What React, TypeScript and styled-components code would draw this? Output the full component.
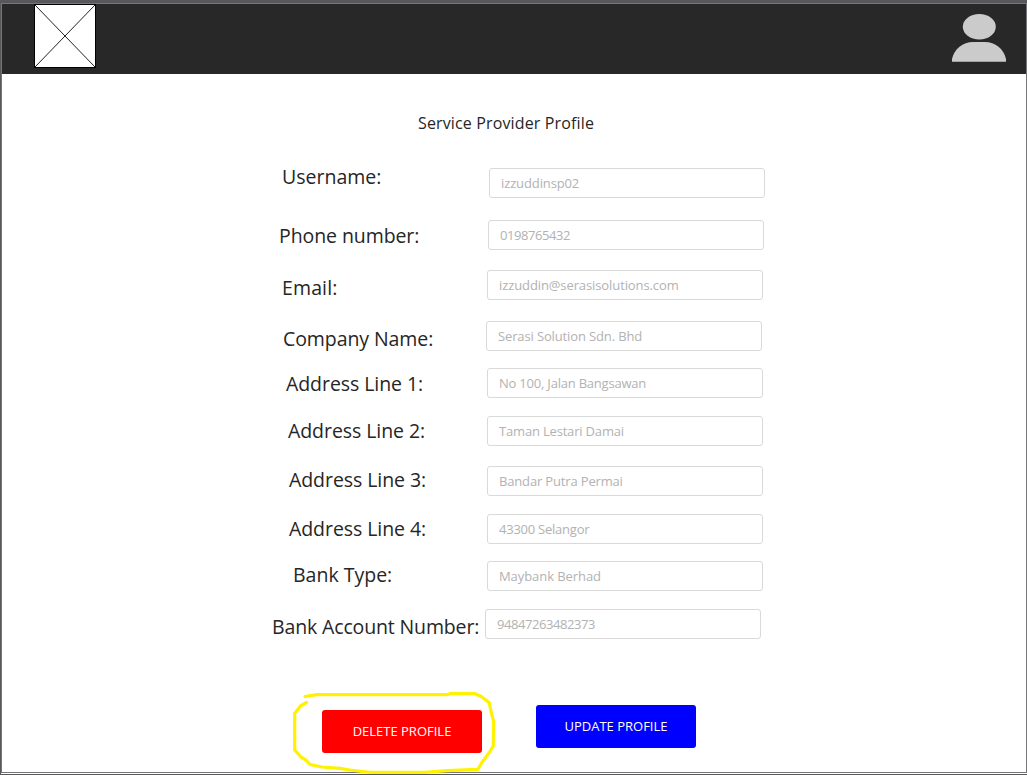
import React from "react";
import styled, { createGlobalStyle } from "styled-components";

const GlobalStyle = createGlobalStyle`
  * { box-sizing: border-box; }
  body {
    margin: 0;
    background: #57575c;
    font-family: "Open Sans", "Noto Sans", sans-serif;
    color: #262626;
  }
`;

const Frame = styled.div`
  display: flex;
  flex-direction: column;
  height: 775px;
  width: 1027px;
  overflow: hidden;
  padding: 3px 0 0 1px;
  border-bottom: 1px solid #57575c;
`;

const Page = styled.div`
  position: relative;
  height: 770px;
  flex: none;
  display: flex;
  flex-direction: column;
  background: #fff;
  border: 1px solid #77777a;
`;

const Gutter = styled.div`
  height: 1px;
  flex: none;
  background: #fff;
`;

const Header = styled.header`
  display: flex;
  justify-content: space-between;
  align-items: flex-start;
  height: 70px;
  flex: none;
  padding: 0 20px 0 32px;
  background: #282828;
`;

const Logo = styled.svg`
  display: block;
`;

const Avatar = styled.svg`
  display: block;
  margin-top: 9px;
`;

const Title = styled.h1`
  margin: 37px 0 0 416px;
  height: 24px;
  font-size: 16px;
  line-height: 24px;
  font-weight: 400;
  letter-spacing: 0.14px;
  white-space: nowrap;
`;

const Form = styled.form`
  display: flex;
  flex-direction: column;
  margin-top: 25px;
`;

const Row = styled.div<{ $height: number }>`
  display: flex;
  align-items: flex-start;
  height: ${(p) => p.$height}px;
`;

const Label = styled.label<{ $indent: number; $width: number; $shift: number; $tracking: number }>`
  flex: none;
  width: ${(p) => p.$width}px;
  padding-left: ${(p) => p.$indent}px;
  margin-top: ${(p) => 10 + p.$shift}px;
  font-size: 19.5px;
  line-height: 26px;
  letter-spacing: ${(p) => p.$tracking}px;
  white-space: nowrap;
`;

const Field = styled.input<{ $tracking: number }>`
  width: 276px;
  height: 30px;
  margin: 8px 0 0;
  padding: 0 11px;
  border: 1px solid #d9d9d9;
  border-radius: 3px;
  outline: none;
  background: #fff;
  color: #b2b2b2;
  font: 400 13px "Open Sans", "Noto Sans", sans-serif;
  letter-spacing: ${(p) => p.$tracking}px;
`;

const Actions = styled.div`
  display: flex;
  align-items: flex-start;
  gap: 54px;
  margin: 57px 0 0 320px;
`;

const Button = styled.button<{ $color: string; $drop?: number }>`
  width: 160px;
  height: 43px;
  margin: ${(p) => p.$drop ?? 0}px 0 0;
  padding: 0 0 2px;
  border: 0;
  border-radius: 3px;
  background: ${(p) => p.$color};
  color: #fff;
  font: 400 13px "Open Sans", "Noto Sans", sans-serif;
`;

const Marker = styled.svg`
  position: absolute;
  left: 288px;
  top: 682px;
  pointer-events: none;
`;

/* x positions are measured from the page's left edge */
const rows = [
  { id: "username", label: "Username:", value: "izzuddinsp02", labelX: 280, fieldX: 487, shift: -6, height: 52, labelTracking: 0, valueTracking: -0.12 },
  { id: "phone", label: "Phone number:", value: "0198765432", labelX: 277, fieldX: 486, shift: 1, height: 50, labelTracking: -0.08, valueTracking: -0.43 },
  { id: "email", label: "Email:", value: "izzuddin@serasisolutions.com", labelX: 280, fieldX: 485, shift: 3, height: 51, labelTracking: 0.12, valueTracking: -0.1 },
  { id: "company", label: "Company Name:", value: "Serasi Solution Sdn. Bhd", labelX: 281, fieldX: 484, shift: 3, height: 47, labelTracking: -0.08, valueTracking: -0.13 },
  { id: "address1", label: "Address Line 1:", value: "No 100, Jalan Bangsawan", labelX: 284, fieldX: 485, shift: 1, height: 48, labelTracking: -0.07, valueTracking: -0.21 },
  { id: "address2", label: "Address Line 2:", value: "Taman Lestari Damai", labelX: 286, fieldX: 485, shift: 0, height: 50, labelTracking: -0.07, valueTracking: -0.18 },
  { id: "address3", label: "Address Line 3:", value: "Bandar Putra Permai", labelX: 287, fieldX: 485, shift: -1, height: 48, labelTracking: -0.07, valueTracking: -0.16 },
  { id: "address4", label: "Address Line 4:", value: "43300 Selangor", labelX: 287, fieldX: 485, shift: 0, height: 47, labelTracking: -0.07, valueTracking: -0.24 },
  { id: "bank", label: "Bank Type:", value: "Maybank Berhad", labelX: 291, fieldX: 485, shift: -1, height: 48, labelTracking: 0, valueTracking: -0.07 },
  { id: "account", label: "Bank Account Number:", value: "94847263482373", labelX: 270, fieldX: 483, shift: 3, height: 47, labelTracking: -0.14, valueTracking: -0.43 },
];

export default function App() {
  return (
    <>
      <GlobalStyle />
      <Frame>
        <Page>
          <Header>
            <Logo width="62" height="64" viewBox="0 0 62 64">
              <rect x="0.5" y="0.5" width="61" height="63" fill="#fff" stroke="#000" />
              <path d="M1 1L61 63M61 1L1 63" stroke="#222" strokeWidth="1" />
            </Logo>
            <Avatar width="54" height="50" viewBox="0 0 54 50">
              <ellipse cx="27.3" cy="13.7" rx="16.5" ry="12.7" fill="#cbcbcb" />
              <path d="M0 48.800V46C2 36 11 29 21 29H33C43 29 52 36 54 46V48.800Z" fill="#cbcbcb" />
            </Avatar>
          </Header>
          <Title>Service Provider Profile</Title>
          <Form>
            {rows.map((r) => (
              <Row key={r.id} $height={r.height}>
                <Label
                  htmlFor={r.id}
                  $indent={r.labelX}
                  $width={r.fieldX}
                  $shift={r.shift}
                  $tracking={r.labelTracking}
                >
                  {r.label}
                </Label>
                <Field id={r.id} defaultValue={r.value} $tracking={r.valueTracking} />
              </Row>
            ))}
            <Actions>
              <Button type="button" $color="#ff0000" $drop={5}>DELETE PROFILE</Button>
              <Button type="button" $color="#0000ff">UPDATE PROFILE</Button>
            </Actions>
          </Form>
          <Marker width="220" height="90" viewBox="290 686 220 90" fill="none" stroke="#fff200" strokeWidth="3.2" strokeLinecap="round" strokeLinejoin="round">
            <path d="M306.500 702.500L300.500 706L294.700 713.500V750L301.500 757.500L306 760L310 764.500L322 767L340 768.300L350 770L370 772.300H425L447 770.700L478 769.300L482.300 761.700L488.300 754L493.300 746L493.700 721.700L491.300 712.700L489.300 702.700L481.700 696.700L475 693.700H450L447 694.700H317L305 696.500" />
          </Marker>
        </Page>
        <Gutter />
      </Frame>
    </>
  );
}
